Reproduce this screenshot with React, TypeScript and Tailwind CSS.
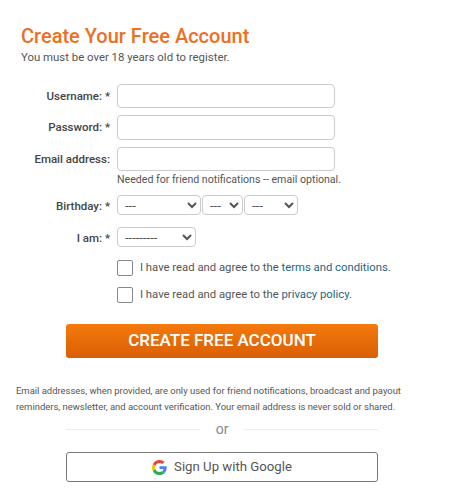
import React from 'react';

const font = { fontFamily: 'Roboto, sans-serif' };

function Row({ label, className, labelClass = '', children }: { label: string; className: string; labelClass?: string; children: React.ReactNode }) {
  return (
    <div className={`flex items-start ${className}`}>
      <label className={`w-[96px] shrink-0 pr-[7px] text-right text-[11.5px] leading-[23px] font-medium text-[#444] ${labelClass}`}>{label}</label>
      <div>{children}</div>
    </div>
  );
}

function Dropdown({ text, width }: { text: string; width: string }) {
  return (
    <select className={`${width} block h-[20px] rounded-[4px] border border-[#ccc] bg-white pl-[3px] text-[13px] text-[#555] outline-none`}>
      <option>{text}</option>
    </select>
  );
}

function GoogleLogo() {
  return (
    <svg viewBox="0 0 48 48" className="h-[15px] w-[15px]">
      <path fill="#EA4335" d="M24 9.5c3.5 0 6.7 1.2 9.2 3.6l6.9-6.9C35.9 2.4 30.500 0 24 0 14.600 0 6.500 5.400 2.600 13.200l8 6.200C12.500 13.600 17.800 9.500 24 9.500z" />
      <path fill="#4285F4" d="M47 24.500c0-1.600-.1-3.100-.4-4.500H24v9h12.900c-.6 3-2.200 5.500-4.700 7.200l7.700 6C44.400 37.600 47 31.600 47 24.500z" />
      <path fill="#FBBC05" d="M10.600 28.600c-.5-1.400-.8-3-.8-4.600s.3-3.200.8-4.600l-8-6.200C.9 16.500 0 20.100 0 24s.9 7.500 2.600 10.800l8-6.200z" />
      <path fill="#34A853" d="M24 48c6.500 0 11.900-2.100 15.900-5.800l-7.700-6c-2.200 1.500-4.900 2.300-8.200 2.300-6.200 0-11.500-4.100-13.400-9.900l-8 6.200C6.500 42.600 14.600 48 24 48z" />
    </svg>
  );
}

export default function App() {
  return (
    <div className="h-[498px] w-[474px] overflow-hidden bg-white" style={font}>
      <div className="pl-[21px] pt-[25px]">
        <h1 className="text-[20px] leading-[22px] font-medium text-[#ee6f1f]">Create Your Free Account</h1>
        <p className="mt-[1px] text-[11.4px] leading-[18px] text-[#555]">You must be over 18 years old to register.</p>
      </div>

      <form className="mt-[18px] pl-[21px]">
        <Row label="Username: *" className="" labelClass="pt-[1px]">
          <input className="block h-[24px] w-[218px] rounded-[4px] border border-[#ccc] bg-white" />
        </Row>
        <Row label="Password: *" className="mt-[7px]" labelClass="pt-[1px]">
          <input className="block h-[25px] w-[218px] rounded-[4px] border border-[#ccc] bg-white" />
        </Row>
        <Row label="Email address:" className="mt-[7px]" labelClass="pt-[1px]">
          <input className="block h-[24px] w-[218px] rounded-[4px] border border-[#ccc] bg-white" />
          <p className="mt-[1px] text-[10.6px] leading-[16px] whitespace-nowrap text-[#555]">Needed for friend notifications -- email optional.</p>
        </Row>
        <Row label="Birthday: *" className="mt-[7px]">
          <div className="flex gap-[1px]">
            <Dropdown text="---" width="w-[84px]" />
            <Dropdown text="---" width="w-[41px]" />
            <Dropdown text="---" width="w-[54px]" />
          </div>
        </Row>
        <Row label="I am: *" className="mt-[9px]">
          <Dropdown text="---------" width="w-[79px]" />
        </Row>
        <div className="mt-[10px] ml-[96px] flex flex-col gap-[11px]">
          <label className="flex items-center gap-[7px] text-[11.3px] leading-[16px] text-[#555]">
            <span className="h-[16px] w-[16px] rounded-[2px] border border-[#888] bg-white" />
            <span>I have read and agree to the <a className="text-[#23657f]">terms and conditions.</a></span>
          </label>
          <label className="flex items-center gap-[7px] text-[11.3px] leading-[16px] text-[#555]">
            <span className="h-[16px] w-[16px] rounded-[2px] border border-[#888] bg-white" />
            <span>I have read and agree to the <a className="text-[#23657f]">privacy policy.</a></span>
          </label>
        </div>
      </form>

      <div className="mt-[21px] ml-[66px] w-[312px]">
        <button className="h-[34px] w-full rounded-[3px] bg-gradient-to-b from-[#f47a0c] to-[#d95f05] text-[17px] font-medium text-white">CREATE FREE ACCOUNT</button>
      </div>

      <p className="mt-[25px] ml-[16px] text-[9.45px] leading-[16px] whitespace-nowrap text-[#555]">
        Email addresses, when provided, are only used for friend notifications, broadcast and payout<br />
        reminders, newsletter, and account verification. Your email address is never sold or shared.
      </p>

      <div className="mt-[6px] ml-[66px] flex w-[312px] items-center gap-[16px]">
        <div className="h-px flex-1 bg-[#eee]" />
        <span className="text-[14px] leading-[16px] text-[#888]">or</span>
        <div className="h-px flex-1 bg-[#eee]" />
      </div>

      <button className="mt-[15px] ml-[66px] flex h-[30px] w-[312px] items-center justify-center gap-[7px] rounded-[3px] border border-[#777] bg-white text-[13.2px] text-[#555]">
        <GoogleLogo />
        Sign Up with Google
      </button>
    </div>
  );
}
